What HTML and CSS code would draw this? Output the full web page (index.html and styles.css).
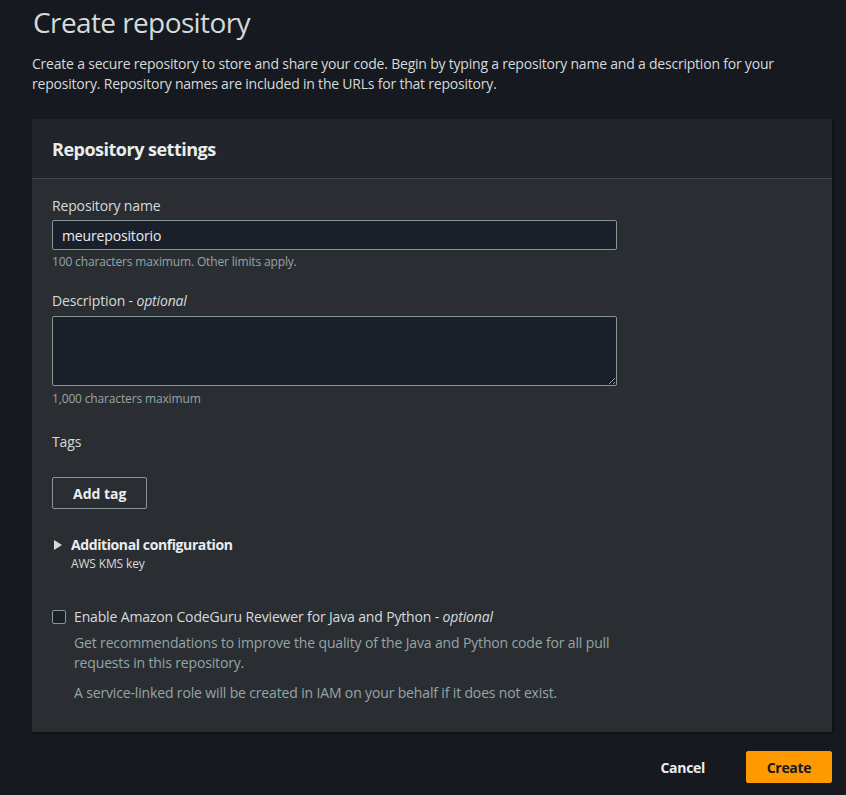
FILE: index.html
```html
<!DOCTYPE html>
<html lang="en">
<head>
<meta charset="utf-8">
<title>Create repository</title>
<link rel="stylesheet" href="styles.css">
</head>
<body>
<main class="page">
  <h1 class="title">Create repository</h1>
  <p class="intro">Create a secure repository to store and share your code. Begin by typing a repository name and a description for your repository. Repository names are included in the URLs for that repository.</p>

  <section class="panel">
    <header class="panel-header">
      <h2 class="panel-title">Repository settings</h2>
    </header>
    <div class="panel-body">
      <div class="field">
        <label class="label" for="name">Repository name</label>
        <input class="input" id="name" type="text" value="meurepositorio">
        <div class="hint">100 characters maximum. Other limits apply.</div>
      </div>

      <div class="field field-desc">
        <label class="label" for="desc">Description - <i>optional</i></label>
        <textarea class="textarea" id="desc"></textarea>
        <div class="hint">1,000 characters maximum</div>
      </div>

      <div class="field field-tags">
        <div class="label">Tags</div>
        <button class="btn-normal" type="button">Add tag</button>
      </div>

      <div class="expander">
        <div class="expander-head">
          <svg class="caret" width="8" height="10" viewBox="0 0 8 10"><path d="M0 0 L8 5 L0 10 Z" fill="#d5dbdb"/></svg>
          <span class="expander-title">Additional configuration</span>
        </div>
        <div class="expander-sub">AWS KMS key</div>
      </div>

      <div class="check">
        <span class="checkbox"></span>
        <div class="check-text">
          <div class="check-label">Enable Amazon CodeGuru Reviewer for Java and Python - <i>optional</i></div>
          <p class="check-desc">Get recommendations to improve the quality of the Java and Python code for all pull requests in this repository.</p>
          <p class="check-desc check-desc2">A service-linked role will be created in IAM on your behalf if it does not exist.</p>
        </div>
      </div>
    </div>
  </section>

  <div class="actions">
    <button class="btn-link" type="button">Cancel</button>
    <button class="btn-primary" type="button">Create</button>
  </div>
</main>
</body>
</html>
```

FILE: styles.css
```css
* { box-sizing: border-box; }

html, body {
  margin: 0;
  background: #16191f;
}

body {
  font-family: "Open Sans", "Noto Sans", sans-serif;
  color: #d1d5db;
  font-size: 14px;
  line-height: 20px;
  letter-spacing: -0.15px;
}

.page {
  padding: 4px 14px 12px 32px;
}

.title {
  margin: 0;
  font-size: 28px;
  font-weight: 400;
  line-height: 36px;
  padding-left: 1px;
  letter-spacing: -0.6px;
  color: #d5dbdb;
}

.intro {
  margin: 14px 0 0;
  max-width: 770px;
  letter-spacing: -0.21px;
  color: #d5dbdb;
}

.panel {
  margin-top: 25px;
  background: #2a2e33;
  box-shadow: 1px 1px 2px rgba(0, 0, 0, 0.5);
}

.panel-header {
  background: #22262c;
  height: 60px;
  padding: 0 20px;
  display: flex;
  align-items: center;
  border-bottom: 1px solid #414750;
}

.panel-title {
  margin: 0;
  font-size: 18px;
  font-weight: 700;
  line-height: 22px;
  letter-spacing: -0.5px;
  color: #eaeded;
}

.panel-body {
  padding: 17px 20px 29px;
}

.field {
  display: flex;
  flex-direction: column;
  align-items: flex-start;
}

.label {
  display: block;
  line-height: 20px;
  margin-bottom: 4px;
  color: #d5dbdb;
}

.input, .textarea {
  width: 565px;
  background: #1a2029;
  border: 1px solid #879596;
  border-radius: 2px;
  color: #eaeded;
  font-family: inherit;
  font-size: 14px;
  letter-spacing: -0.15px;
  outline: none;
}

.input {
  height: 30px;
  padding: 0 9px;
}

.textarea {
  height: 70px;
  resize: vertical;
  display: block;
}

.hint {
  margin-top: 4px;
  font-size: 12px;
  line-height: 16px;
  color: #95a5a6;
}

.field-desc {
  margin-top: 21px;
}

.field-desc .label {
  margin-bottom: 5px;
}

.field-desc .hint {
  margin-top: 5px;
}

.field-tags {
  margin-top: 25px;
}

.field-tags .label {
  margin-bottom: 25px;
}

.btn-normal {
  height: 32px;
  padding: 0 20px;
  background: transparent;
  border: 1px solid #879596;
  border-radius: 2px;
  color: #eaeded;
  font-family: inherit;
  font-size: 14px;
  font-weight: 700;
  letter-spacing: 0;
}

.expander {
  margin-top: 26px;
}

.expander-head {
  display: flex;
  align-items: center;
  gap: 9px;
  padding-left: 2px;
}

.caret {
  flex: none;
}

.expander-title {
  font-weight: 700;
  letter-spacing: -0.4px;
  color: #eaeded;
}

.expander-sub {
  margin-top: 1px;
  padding-left: 19px;
  font-size: 12px;
  line-height: 16px;
  color: #d5dbdb;
}

.check {
  margin-top: 35px;
  display: flex;
  gap: 8px;
}

.checkbox {
  flex: none;
  width: 14px;
  height: 14px;
  margin-top: 3px;
  border: 1px solid #879596;
  border-radius: 2px;
  background: #1a2029;
}

.check-label {
  color: #d5dbdb;
}

.check-desc {
  margin: 6px 0 0;
  max-width: 560px;
  color: #95a5a6;
}

.check-desc2 {
  margin-top: 10px;
}

.actions {
  margin-top: 19px;
  display: flex;
  justify-content: flex-end;
  align-items: center;
  gap: 21px;
}

.btn-link {
  height: 32px;
  padding: 0 20px;
  background: transparent;
  border: none;
  color: #eaeded;
  font-family: inherit;
  font-size: 14px;
  font-weight: 700;
  letter-spacing: -0.3px;
}

.btn-primary {
  height: 32px;
  width: 86px;
  background: #ff9900;
  border: 1px solid #ff9900;
  border-radius: 2px;
  color: #16191f;
  font-family: inherit;
  font-size: 14px;
  font-weight: 700;
  letter-spacing: -0.3px;
}
```
